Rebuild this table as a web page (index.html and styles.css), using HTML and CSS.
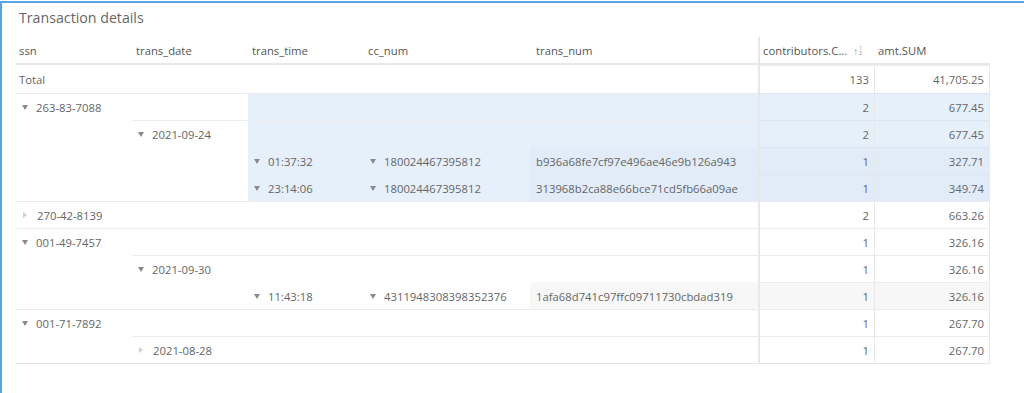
FILE: index.html
```html
<!DOCTYPE html>
<html lang="en">
<head>
  <meta charset="UTF-8">
  <title>Transaction details</title>
  <link rel="stylesheet" href="styles.css">
</head>
<body>
  <div class="visual">
    <div class="visual-title">Transaction details</div>

    <div class="matrix">
      <div class="row head">
        <div class="c">ssn</div>
        <div class="c">trans_date</div>
        <div class="c">trans_time</div>
        <div class="c">cc_num</div>
        <div class="c">trans_num</div>
        <div class="c">
          <span class="label">contributors.C...</span>
          <span class="sort"><span class="arrow">&#8593;</span><span class="digits"><span>1</span><span>2</span></span></span>
        </div>
        <div class="c">amt.SUM</div>
      </div>

      <div class="row total">
        <div class="c">Total</div>
        <div class="c"></div>
        <div class="c"></div>
        <div class="c"></div>
        <div class="c"></div>
        <div class="c num">133</div>
        <div class="c num">41,705.25</div>
      </div>

      <div class="row l0 hl">
        <div class="c"><span class="tri down"></span>263-83-7088</div>
        <div class="c"></div>
        <div class="c"></div>
        <div class="c"></div>
        <div class="c"></div>
        <div class="c num">2</div>
        <div class="c num">677.45</div>
      </div>
      <div class="row l1 hl">
        <div class="c"></div>
        <div class="c"><span class="tri down"></span>2021-09-24</div>
        <div class="c"></div>
        <div class="c"></div>
        <div class="c"></div>
        <div class="c num">2</div>
        <div class="c num">677.45</div>
      </div>
      <div class="row leaf hl">
        <div class="c"></div>
        <div class="c"></div>
        <div class="c"><span class="tri down"></span>01:37:32</div>
        <div class="c"><span class="tri down"></span>180024467395812</div>
        <div class="c">b936a68fe7cf97e496ae46e9b126a943</div>
        <div class="c num">1</div>
        <div class="c num">327.71</div>
      </div>
      <div class="row leaf hl">
        <div class="c"></div>
        <div class="c"></div>
        <div class="c"><span class="tri down"></span>23:14:06</div>
        <div class="c"><span class="tri down"></span>180024467395812</div>
        <div class="c">313968b2ca88e66bce71cd5fb66a09ae</div>
        <div class="c num">1</div>
        <div class="c num">349.74</div>
      </div>

      <div class="row l0">
        <div class="c"><span class="tri right"></span>270-42-8139</div>
        <div class="c"></div>
        <div class="c"></div>
        <div class="c"></div>
        <div class="c"></div>
        <div class="c num">2</div>
        <div class="c num">663.26</div>
      </div>

      <div class="row l0">
        <div class="c"><span class="tri down"></span>001-49-7457</div>
        <div class="c"></div>
        <div class="c"></div>
        <div class="c"></div>
        <div class="c"></div>
        <div class="c num">1</div>
        <div class="c num">326.16</div>
      </div>
      <div class="row l1">
        <div class="c"></div>
        <div class="c"><span class="tri down"></span>2021-09-30</div>
        <div class="c"></div>
        <div class="c"></div>
        <div class="c"></div>
        <div class="c num">1</div>
        <div class="c num">326.16</div>
      </div>
      <div class="row leaf">
        <div class="c"></div>
        <div class="c"></div>
        <div class="c"><span class="tri down"></span>11:43:18</div>
        <div class="c"><span class="tri down"></span>4311948308398352376</div>
        <div class="c">1afa68d741c97ffc09711730cbdad319</div>
        <div class="c num">1</div>
        <div class="c num">326.16</div>
      </div>

      <div class="row l0">
        <div class="c"><span class="tri down"></span>001-71-7892</div>
        <div class="c"></div>
        <div class="c"></div>
        <div class="c"></div>
        <div class="c"></div>
        <div class="c num">1</div>
        <div class="c num">267.70</div>
      </div>
      <div class="row l1">
        <div class="c"></div>
        <div class="c"><span class="tri right"></span>2021-08-28</div>
        <div class="c"></div>
        <div class="c"></div>
        <div class="c"></div>
        <div class="c num">1</div>
        <div class="c num">267.70</div>
      </div>
    </div>
  </div>
</body>
</html>
```

FILE: styles.css
```css
html, body {
  margin: 0;
  height: 100%;
  background: #fff;
}
body {
  font-family: 'Open Sans', sans-serif;
  color: #666;
  overflow: hidden;
}
.visual {
  margin-top: 1px;
  height: calc(100% - 1px);
  box-sizing: border-box;
  border-top: 2px solid #5aa3e3;
  border-left: 2px solid #5aa3e3;
}
.visual-title {
  height: 33px;
  padding-left: 17px;
  font-size: 14.2px;
  line-height: 29px;
  color: #666;
}
.matrix {
  margin-left: 14px;
  width: 974px;
  border-bottom: 1px solid #e6e6e6;
  font-size: 11.3px;
}
.row {
  display: grid;
  grid-template-columns: 116px 116px 116px 166px 228px 116px 116px;
  height: 27px;
}
.c {
  box-sizing: border-box;
  display: flex;
  align-items: center;
  padding: 0 4px 0 6px;
  border-top: 1px solid transparent;
  white-space: nowrap;
  overflow: hidden;
}
.c.num {
  justify-content: flex-end;
  padding-right: 5px;
  border-top-color: #ececec;
}
.c:nth-child(6) {
  border-left: 2px solid #e8e8e8;
}
.row:not(.head) .c:nth-child(7) {
  border-left: 1px solid #e8e8e8;
  border-right: 1px solid #e8e8e8;
}

/* header */
.head {
  height: 27px;
  border-bottom: 2px solid #e8e8e8;
  color: #555;
}
.head .c {
  padding: 1px 4px 0 4px;
}
.head .c:first-child {
  padding-left: 3px;
}
.head .c:nth-child(5) {
  padding-left: 6px;
}
.head .c:nth-child(6) {
  padding-left: 3px;
}
.head .label {
  overflow: hidden;
  text-overflow: ellipsis;
}
.sort {
  display: flex;
  align-items: center;
  margin-left: 6px;
  color: #888;
}
.sort .arrow {
  font-size: 10px;
  line-height: 1;
}
.sort .digits {
  display: flex;
  flex-direction: column;
  font-size: 5px;
  line-height: 5px;
  margin-left: 1px;
}
.total {
  height: 28px;
}
.total .c:first-child {
  padding-left: 3px;
}

/* row separators by level */
.l0 .c {
  border-top-color: #ebebeb;
}
.l1 .c:nth-child(n+2) {
  border-top-color: #ebebeb;
}

/* highlight */
.hl .c:nth-child(n+3) {
  background: #e6f0fb;
}
.hl.leaf .c:nth-child(n+5) {
  background: #e1ecf8;
}
.leaf .c:nth-child(n+5) {
  background: #f7f7f7;
}
.hl .c.num {
  border-top-color: #dbe6f2;
}

/* expand toggles */
.tri {
  display: inline-block;
  width: 0;
  height: 0;
  margin-right: 8px;
}
.tri.down {
  border-left: 3.5px solid transparent;
  border-right: 3.5px solid transparent;
  border-top: 5px solid #8a8a8a;
}
.tri.right {
  margin-left: 1px;
  margin-right: 10px;
  border-top: 3.5px solid transparent;
  border-bottom: 3.5px solid transparent;
  border-left: 4px solid #cfcfcf;
}
```
